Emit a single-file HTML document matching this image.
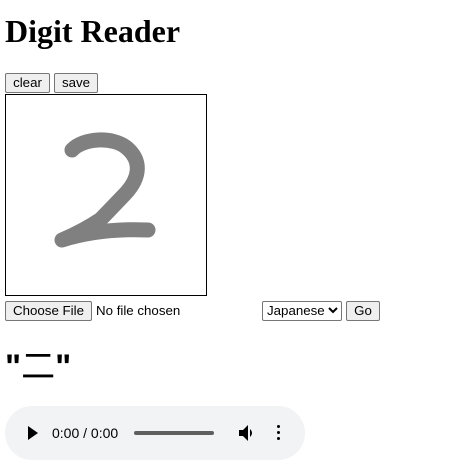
<!DOCTYPE html>
<html><head><style>
body{margin:0;width:454px;height:475px;background:#fff;position:relative;font-family:"Liberation Sans",sans-serif;overflow:hidden}
.a{position:absolute}
h1{margin:0;position:absolute;left:5px;top:13px;font:bold 32px "Liberation Serif",serif}
.btn{position:absolute;height:20px;box-sizing:border-box;border:1px solid #767676;border-radius:2px;background:#efefef;font-size:13.3px;line-height:18px;text-align:center;color:#000}
</style></head><body>
<h1>Digit Reader</h1>
<div class="btn" style="left:5px;top:73px;width:45px">clear</div>
<div class="btn" style="left:54px;top:73px;width:44px">save</div>
<svg class="a" style="left:5px;top:94px" width="202" height="202">
<rect x="0.5" y="0.5" width="201" height="201" fill="#fff" stroke="#000"/>
<path d="M67,56 C78,44 108,42 122,54 C137,67 135,84 120,100 L96,125 Q80,136 57,146 Q95,134 143,136" fill="none" stroke="#808080" stroke-width="15" stroke-linecap="round" stroke-linejoin="round"/>
</svg>
<div class="btn" style="left:5px;top:301px;width:87px">Choose File</div>
<div class="a" style="left:96px;top:303px;font-size:13.3px">No file chosen</div>
<div class="a" style="left:262px;top:301px;width:80px;height:20px;box-sizing:border-box;border:1px solid #767676;border-radius:2px;font-size:13.3px;line-height:18px;padding-left:4px">Japanese</div>
<svg class="a" style="left:328px;top:307px" width="10" height="8"><path d="M1,1 L5,5 L9,1" fill="none" stroke="#000" stroke-width="2"/></svg>
<div class="btn" style="left:346px;top:301px;width:34px">Go</div>
<div class="a" style="left:5px;top:339px;font:bold 34px 'Liberation Sans','Noto Sans CJK JP',sans-serif">"<span style="font-weight:normal">二</span>"</div>
<div class="a" style="left:5px;top:406px;width:300px;height:54px;border-radius:27px;background:#f1f3f4">
<svg class="a" style="left:22px;top:20px" width="12" height="14"><path d="M1,0 L11,7 L1,14Z" fill="#000"/></svg>
<div class="a" style="left:47px;top:19px;font-size:14px;color:#000">0:00 / 0:00</div>
<div class="a" style="left:129px;top:25px;width:80px;height:4px;border-radius:2px;background:#5f5f5f"></div>
<svg class="a" style="left:233px;top:18px" width="18" height="18"><path d="M1,6 H5 L10,1 V17 L5,12 H1Z M12,5 Q16,9 12,13Z" fill="#000"/></svg>
<div class="a" style="left:272px;top:19px;width:3px"><div style="width:3px;height:3px;background:#000;border-radius:2px;margin-bottom:3px"></div><div style="width:3px;height:3px;background:#000;border-radius:2px;margin-bottom:3px"></div><div style="width:3px;height:3px;background:#000;border-radius:2px"></div></div>
</div>
</body></html>
